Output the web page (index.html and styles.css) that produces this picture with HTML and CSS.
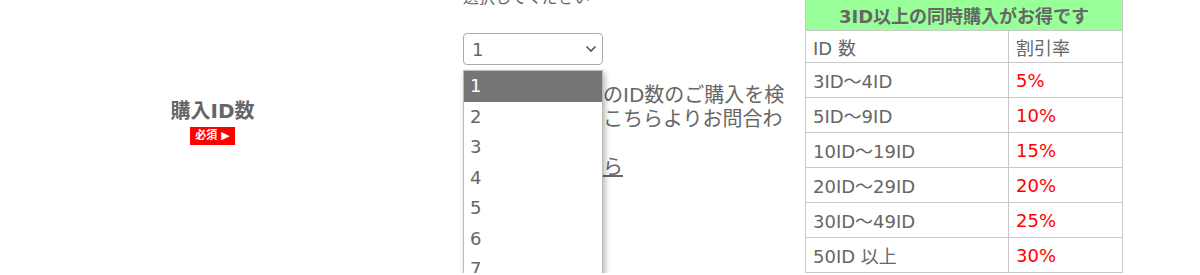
FILE: index.html
```html
<!DOCTYPE html>
<html lang="ja">
<head>
  <meta charset="UTF-8" />
  <title>購入ID数</title>
  <link rel="stylesheet" href="styles.css">
</head>
<body>
  <div class="form-row">
    <div class="form-label">
      <div class="label-text">購入ID数</div>
      <span class="required">必須 ▶</span>
    </div>

    <div class="form-field">
      <p class="hint">選択してください</p>
      <div class="select-wrap">
        <div class="select-box">
          <span>1</span>
          <svg class="chevron" width="12" height="8" viewBox="0 0 12 8"><path d="M1.5 1.5 L6 6 L10.5 1.5" fill="none" stroke="#555" stroke-width="1.6"/></svg>
        </div>
        <ul class="select-list">
          <li class="active">1</li>
          <li>2</li>
          <li>3</li>
          <li>4</li>
          <li>5</li>
          <li>6</li>
          <li>7</li>
          <li>8</li>
        </ul>
      </div>
      <p class="note">上記以上の大口のID数のご購入を検討中のお客様はこちらよりお問合わせください。</p>
      <p class="note link"><a href="#">お問合せはこちら</a></p>
    </div>

    <table class="discount">
      <tr><th colspan="2">3ID以上の同時購入がお得です</th></tr>
      <tr><td class="col-id">ID 数</td><td>割引率</td></tr>
      <tr><td>3ID～4ID</td><td class="rate">5%</td></tr>
      <tr><td>5ID～9ID</td><td class="rate">10%</td></tr>
      <tr><td>10ID～19ID</td><td class="rate">15%</td></tr>
      <tr><td>20ID～29ID</td><td class="rate">20%</td></tr>
      <tr><td>30ID～49ID</td><td class="rate">25%</td></tr>
      <tr><td>50ID 以上</td><td class="rate">30%</td></tr>
    </table>
  </div>
</body>
</html>
```

FILE: styles.css
```css
body {
  margin: 0;
  font-family: 'DejaVu Sans', 'Noto Sans CJK JP', sans-serif;
  background-color: #FFFFFF;
  color: #666666;
  overflow: hidden;
}
.form-row {
  display: flex;
  align-items: flex-start;
  margin-top: -14px;
}
.form-label {
  width: 425px;
  padding-top: 112px;
  display: flex;
  flex-direction: column;
  align-items: center;
}
.label-text {
  font-size: 20px;
  font-weight: bold;
  line-height: 26px;
}
.required {
  margin-top: 3px;
  background-color: #FF0000;
  color: #FFFFFF;
  font-size: 11px;
  font-weight: bold;
  padding: 2px 5px;
  line-height: 14px;
}
.form-field {
  margin-left: 38px;
  width: 330px;
}
.hint {
  margin: 0;
  font-size: 16px;
  line-height: 24px;
}
.select-wrap {
  position: relative;
  margin-top: 23px;
  width: 140px;
}
.select-box {
  height: 30px;
  border: 1px solid #AAAAAA;
  border-radius: 4px;
  display: flex;
  align-items: center;
  justify-content: space-between;
  padding: 0 5px 0 8px;
  font-size: 18px;
}
.select-list {
  position: absolute;
  top: 37px;
  left: 0;
  width: 138px;
  margin: 0;
  padding: 0;
  list-style: none;
  background-color: #FFFFFF;
  border: 1px solid #BBBBBB;
  box-shadow: 2px 3px 6px rgba(0, 0, 0, 0.3);
  z-index: 10;
}
.select-list li {
  height: 30.5px;
  line-height: 30px;
  padding-left: 6px;
  font-size: 18px;
}
.select-list li.active {
  background-color: #767676;
  color: #FFFFFF;
}
.note {
  margin: 18px 0 0;
  font-size: 20px;
  line-height: 24px;
}
.note.link {
  margin-top: 0;
}
.note a {
  color: #666666;
}
.discount {
  margin-left: 12px;
  margin-top: 13px;
  border-collapse: collapse;
  width: 318px;
  font-size: 18px;
}
.discount th {
  background-color: #99FF99;
  font-size: 18px;
  height: 30px;
  padding: 0;
  border: 1px solid #C8C8C8;
}
.discount td {
  border: 1px solid #C8C8C8;
  height: 34px;
  padding: 0 0 0 7px;
}
.discount td.col-id {
  width: 195px;
}
.discount tr:nth-child(2) td {
  height: 31px;
}
.rate {
  color: #FF0000;
}
```
